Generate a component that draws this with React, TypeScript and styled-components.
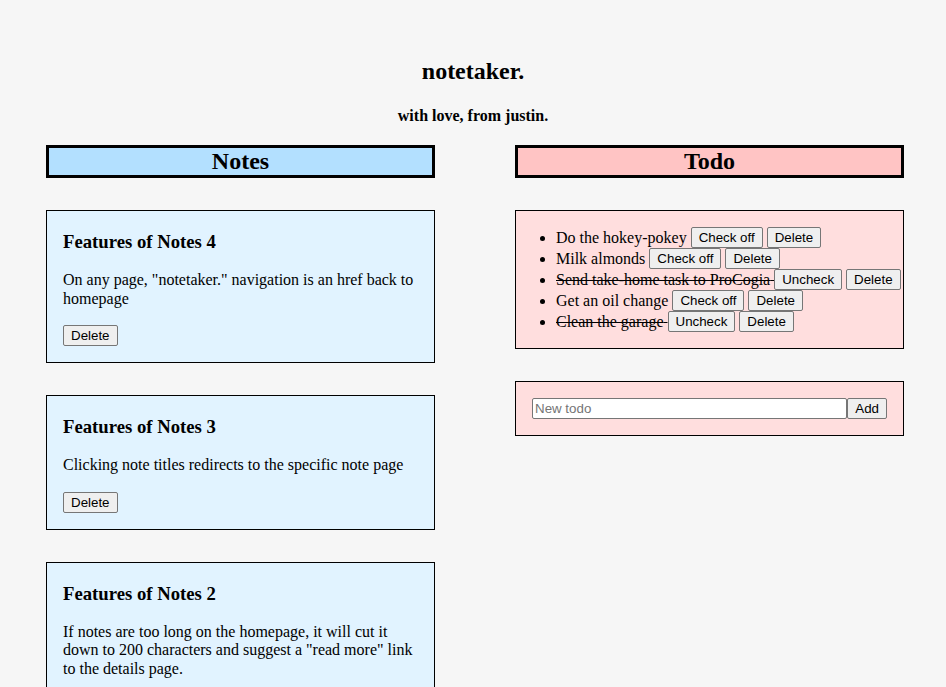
import React from "react";
import styled, { createGlobalStyle } from "styled-components";

const GlobalStyle = createGlobalStyle`
  html, body {
    background: #f6f6f6;
  }
  body {
    margin: 8px;
    font-family: "Liberation Serif", "Times New Roman", serif;
    font-size: 16px;
    color: #000;
  }
`;

const Header = styled.header`
  padding-top: 30px;
  text-align: center;
`;

const Brand = styled.h2`
  margin: 19.92px 0;
  font-size: 24px;
  line-height: 27.6px;
  font-weight: bold;
  a {
    color: #000;
    text-decoration: none;
  }
`;

const Byline = styled.h4`
  margin: 21.28px 0 20.3px;
  font-size: 16px;
  line-height: 18.4px;
  font-weight: bold;
`;

const Columns = styled.main`
  display: grid;
  grid-template-columns: 1fr 1fr;
  column-gap: 80px;
  padding: 0 34px 0 38px;
`;

const Column = styled.section`
  display: flex;
  flex-direction: column;
  gap: 32px;
`;

const SectionTitle = styled.h2<{ $tone: string }>`
  margin: 0;
  border: 3px solid #000;
  background: ${(p) => p.$tone};
  text-align: center;
  font-size: 24px;
  line-height: 27px;
  font-weight: bold;
`;

const NoteCard = styled.article`
  border: 1px solid #000;
  background: #e1f3ff;
  padding: 0 16px;
`;

const NoteTitle = styled.h3`
  margin: 19.7px 0 18.72px;
  font-size: 18.72px;
  line-height: 21.5px;
  font-weight: bold;
`;

const NoteBody = styled.p`
  margin: 18.72px 0 16.9px;
  line-height: 18.4px;
`;

const Actions = styled.div`
  margin-bottom: 16.4px;
  line-height: 21px;
  height: 21px;
`;

const Button = styled.button`
  font-family: "Liberation Sans", Arial, sans-serif;
  font-size: 13.333px;
  line-height: 15px;
  height: 21px;
  box-sizing: border-box;
  padding: 2px 7px;
  margin: 0;
  border: 1px solid #767676;
  border-radius: 2px;
  background: #efefef;
  color: #000;
  vertical-align: top;
`;

const TodoCard = styled.div`
  border: 1px solid #000;
  background: #ffdede;
`;

const TodoList = styled.ul`
  margin: 16px 0;
  padding-left: 40px;
  list-style: disc;
`;

const TodoItem = styled.li`
  line-height: 21px;
  height: 21px;
  white-space: nowrap;
`;

const TodoText = styled.span<{ $done: boolean }>`
  text-decoration: ${(p) => (p.$done ? "line-through" : "none")};
`;

const FormCard = styled.form`
  border: 1px solid #000;
  background: #ffdede;
  padding: 16px;
  display: flex;
`;

const Input = styled.input`
  flex: 1;
  min-width: 0;
  font-family: "Liberation Sans", Arial, sans-serif;
  font-size: 13.333px;
  line-height: 15px;
  padding: 1px 2px;
  margin: 0;
  border: 1px solid #767676;
  border-radius: 2px;
  background: #fff;
  height: 21px;
  box-sizing: border-box;
  &::placeholder {
    color: #757575;
  }
`;

const AddButton = styled(Button)`
  padding: 0 7px;
`;

const notes = [
  {
    title: "Features of Notes 4",
    body: 'On any page, "notetaker." navigation is an href back to homepage',
  },
  {
    title: "Features of Notes 3",
    body: "Clicking note titles redirects to the specific note page",
  },
  {
    title: "Features of Notes 2",
    body:
      'If notes are too long on the homepage, it will cut it down to 200 characters and suggest a "read more" link to the details page.',
  },
];

const todos = [
  { text: "Do the hokey-pokey", done: false },
  { text: "Milk almonds", done: false },
  { text: "Send take-home task to ProCogia", done: true },
  { text: "Get an oil change", done: false },
  { text: "Clean the garage", done: true },
];

export default function App() {
  return (
    <>
      <GlobalStyle />
      <Header>
        <Brand>
          <a href="#">notetaker.</a>
        </Brand>
        <Byline>with love, from justin.</Byline>
      </Header>
      <Columns>
        <Column>
          <SectionTitle $tone="#b3e0ff">Notes</SectionTitle>
          {notes.map((n) => (
            <NoteCard key={n.title}>
              <NoteTitle>{n.title}</NoteTitle>
              <NoteBody>{n.body}</NoteBody>
              <Actions>
                <Button type="button">Delete</Button>
              </Actions>
            </NoteCard>
          ))}
        </Column>
        <Column>
          <SectionTitle $tone="#ffc4c4">Todo</SectionTitle>
          <TodoCard>
            <TodoList>
              {todos.map((t) => (
                <TodoItem key={t.text}>
                  <TodoText $done={t.done}>{t.text} </TodoText>
                  <Button type="button">{t.done ? "Uncheck" : "Check off"}</Button>{" "}
                  <Button type="button">Delete</Button>
                </TodoItem>
              ))}
            </TodoList>
          </TodoCard>
          <FormCard onSubmit={(e) => e.preventDefault()}>
            <Input placeholder="New todo" />
            <AddButton type="submit">Add</AddButton>
          </FormCard>
        </Column>
      </Columns>
    </>
  );
}
